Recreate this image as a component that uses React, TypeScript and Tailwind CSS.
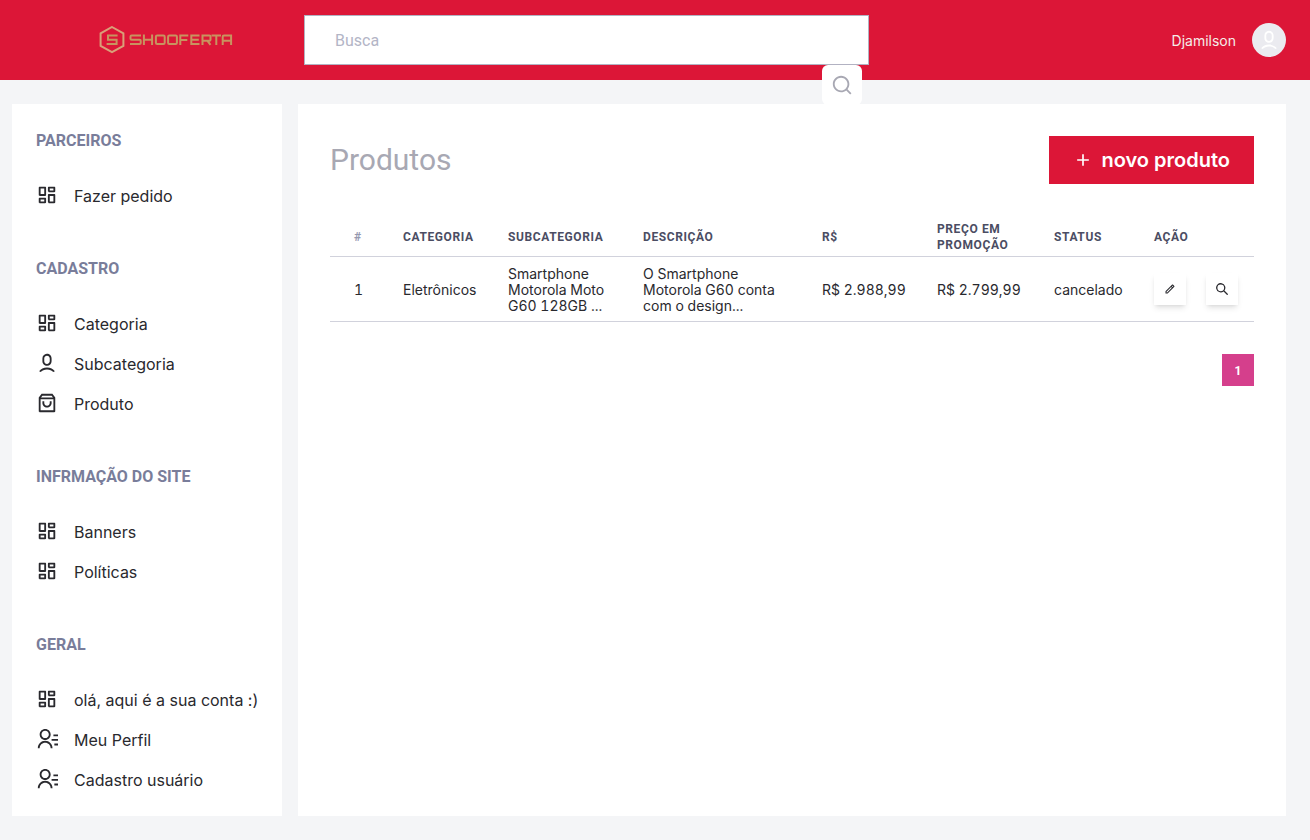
import type { ReactNode } from "react";
import {
  RiAddLine,
  RiContactsLine,
  RiDashboardLine,
  RiPencilLine,
  RiSearchLine,
  RiShoppingBag3Line,
  RiUser6Line,
} from "react-icons/ri";
import type { IconType } from "react-icons";

type NavItem = { label: string; icon: IconType };
type NavGroup = { title: string; items: NavItem[] };

const groups: NavGroup[] = [
  { title: "PARCEIROS", items: [{ label: "Fazer pedido", icon: RiDashboardLine }] },
  {
    title: "CADASTRO",
    items: [
      { label: "Categoria", icon: RiDashboardLine },
      { label: "Subcategoria", icon: RiUser6Line },
      { label: "Produto", icon: RiShoppingBag3Line },
    ],
  },
  {
    title: "INFRMAÇÃO DO SITE",
    items: [
      { label: "Banners", icon: RiDashboardLine },
      { label: "Políticas", icon: RiDashboardLine },
    ],
  },
  {
    title: "GERAL",
    items: [
      { label: "olá, aqui é a sua conta :)", icon: RiDashboardLine },
      { label: "Meu Perfil", icon: RiContactsLine },
      { label: "Cadastro usuário", icon: RiContactsLine },
    ],
  },
];

const products = [
  {
    id: 1,
    category: "Eletrônicos",
    subcategory: "Smartphone Motorola Moto G60 128GB ...",
    description: "O Smartphone Motorola G60 conta com o design...",
    price: "R$ 2.988,99",
    promo: "R$ 2.799,99",
    status: "cancelado",
  },
];

function Logo() {
  return (
    <svg
      viewBox="0 0 134 28"
      className="h-7 w-[134px]"
      fill="none"
      stroke="#c8935f"
      strokeWidth="2"
      role="img"
      aria-label="Shooferta"
    >
      <path d="M13 1 24.4 7.4V19.8L13 26.2 1.6 19.8V7.4Z" stroke="#d9a078" />
      <path d="M18.6 9.4H9v4.3h8.6v4.3H7.6" />
      {/* wordmark strokes */}
      <g>
        <path d="M42 9.5h-9.5q-1 0-1 1v2.2q0 1 1 1h8.2q1 0 1 1v2.4q0 1-1 1H31" />
        <path d="M44.9 8.5v10.4M53.1 8.5v10.4M44.9 13.7h8.2" />
        <rect x="56.9" y="9.5" width="8.8" height="8.5" rx="1.2" />
        <rect x="69.1" y="9.5" width="8.8" height="8.5" rx="1.2" />
        <path d="M81.3 18.9V9.5h8M81.3 13.9h7" />
        <path d="M100.5 9.5h-8.2v8.5h8.2M92.3 13.7h7.5" />
        <path d="M103.5 18.9V9.5h7q1 0 1 1v3.2q0 1-1 1h-7M108.5 14.8l3 4.1" />
        <path d="M112.5 9.5h9.5M117.3 9.5v9.4" />
        <path d="M123.7 18.9v-8.1q0-1.3 1.3-1.3h7.1v9.4M123.7 14.8h8.4" />
      </g>
    </svg>
  );
}

function SearchGlyph() {
  return (
    <svg viewBox="0 0 24 24" className="size-3" fill="currentColor" aria-hidden="true">
      <path d="M23.384,21.619,16.855,15.09a9.284,9.284,0,1,0-1.768,1.768l6.529,6.529a1.266,1.266,0,0,0,1.768,0A1.251,1.251,0,0,0,23.384,21.619ZM2.75,9.5a6.75,6.75,0,1,1,6.75,6.75A6.758,6.758,0,0,1,2.75,9.5Z" />
    </svg>
  );
}

function Header() {
  return (
    <header className="flex h-20 items-center bg-[#dc1637] pr-6">
      <a href="#" className="flex w-[304px] shrink-0 pl-[99px]">
        <Logo />
      </a>
      <form className="relative w-[565px] shrink" onSubmit={(e) => e.preventDefault()}>
        <input
          type="search"
          aria-label="Busca"
          placeholder="Busca"
          className="block h-[50px] w-full border border-[#b2b2c2] bg-white px-[30px] font-[Roboto,sans-serif] text-base text-[#353646] outline-none placeholder:text-[#b3b5c6]"
        />
        <button
          type="submit"
          aria-label="Buscar"
          className="absolute top-full right-[7px] flex size-10 items-center justify-center rounded-md bg-white text-[#a8a8b3]"
        >
          <RiSearchLine className="size-[22px]" />
        </button>
      </form>
      <div className="ml-auto flex items-center gap-4">
        <span className="pt-0.5 text-sm text-[#f4ede8]">Djamilson</span>
        <span className="flex size-[34px] items-center justify-center rounded-full bg-[#ebebf0] text-white">
          <RiUser6Line className="size-[22px]" />
        </span>
      </div>
    </header>
  );
}

function Sidebar() {
  return (
    <nav className="flex w-[270px] shrink-0 flex-col gap-10 bg-white px-6 pt-6 pb-4">
      {groups.map((group) => (
        <section key={group.title}>
          <h2 className="mb-[23px] pt-px font-[Roboto,sans-serif] text-base font-bold text-[#797d9a]">
            {group.title}
          </h2>
          <ul>
            {group.items.map(({ label, icon: Icon }) => (
              <li key={label}>
                <a href="#" className="flex h-10 items-center gap-4 whitespace-nowrap">
                  <Icon className="mb-0.5 size-[22px] shrink-0" />
                  {label}
                </a>
              </li>
            ))}
          </ul>
        </section>
      ))}
    </nav>
  );
}

function Th({ className, children }: { className: string; children: ReactNode }) {
  return (
    <th
      scope="col"
      className={`pt-[5px] pb-[3px] text-left font-[Roboto,sans-serif] text-xs/4 font-bold tracking-wider ${className}`}
    >
      {children}
    </th>
  );
}

function Td({ className = "", children }: { className?: string; children: ReactNode }) {
  return <td className={`pt-[9px] pb-[7px] ${className}`}>{children}</td>;
}

function IconButton({ label, children }: { label: string; children: ReactNode }) {
  return (
    <button
      type="button"
      aria-label={label}
      className="flex size-8 items-center justify-center bg-white shadow-md"
    >
      {children}
    </button>
  );
}

function ProductTable() {
  return (
    <table className="mt-8 w-full table-fixed border-separate border-spacing-0 text-[#4b4d63] [&_td]:border-b [&_td]:border-[#d1d2dc] [&_th]:border-b [&_th]:border-[#d1d2dc]">
      <thead>
        <tr>
          <Th className="w-[57px] pl-6 text-[#9699b0]">#</Th>
          <Th className="w-[105px] pl-4">CATEGORIA</Th>
          <Th className="w-[135px] pl-4">SUBCATEGORIA</Th>
          <Th className="w-[179px] pl-4">DESCRIÇÃO</Th>
          <Th className="w-[115px] pl-4">R$</Th>
          <Th className="w-[117px] pl-4">PREÇO EM PROMOÇÃO</Th>
          <Th className="w-[100px] pl-4">STATUS</Th>
          <Th className="w-[116px] pl-4">AÇÃO</Th>
        </tr>
      </thead>
      <tbody className="text-sm/4 text-[#29292e] tabular-nums">
        {products.map((p) => (
          <tr key={p.id}>
            <Td className="pl-6">{p.id}</Td>
            <Td className="pl-4">{p.category}</Td>
            <Td className="pr-4 pl-4">{p.subcategory}</Td>
            <Td className="pr-6 pl-4">
              <div className="overflow-hidden">{p.description}</div>
            </Td>
            <Td className="pl-4 whitespace-nowrap">{p.price}</Td>
            <Td className="pl-4 whitespace-nowrap">{p.promo}</Td>
            <Td className="pl-4">{p.status}</Td>
            <td className="py-2 pl-4">
              <div className="flex gap-5">
                <IconButton label="Editar">
                  <RiPencilLine className="size-3" />
                </IconButton>
                <IconButton label="Visualizar">
                  <SearchGlyph />
                </IconButton>
              </div>
            </td>
          </tr>
        ))}
      </tbody>
    </table>
  );
}

export default function App() {
  return (
    <div className="flex min-h-screen flex-col bg-[#f4f5f7] font-[Inter,sans-serif] text-base text-[#29292e]">
      <Header />
      <div className="flex grow gap-4 pt-6 pr-6 pb-6 pl-3">
        <Sidebar />
        <main className="min-w-0 grow bg-white p-8">
          <div className="flex items-center justify-between">
            <h1 className="font-[Roboto,sans-serif] text-3xl text-[#a8a8b3]">Produtos</h1>
            <button
              type="button"
              className="flex h-12 items-center gap-2 bg-[#dc1637] px-6 text-xl font-semibold text-white"
            >
              <RiAddLine className="size-5" />
              novo produto
            </button>
          </div>
          <ProductTable />
          <div className="mt-8 flex justify-end">
            <button
              type="button"
              aria-current="page"
              className="size-8 bg-[#d53f8c] pt-0.5 font-[Roboto,sans-serif] text-xs font-bold text-white"
            >
              1
            </button>
          </div>
        </main>
      </div>
    </div>
  );
}
